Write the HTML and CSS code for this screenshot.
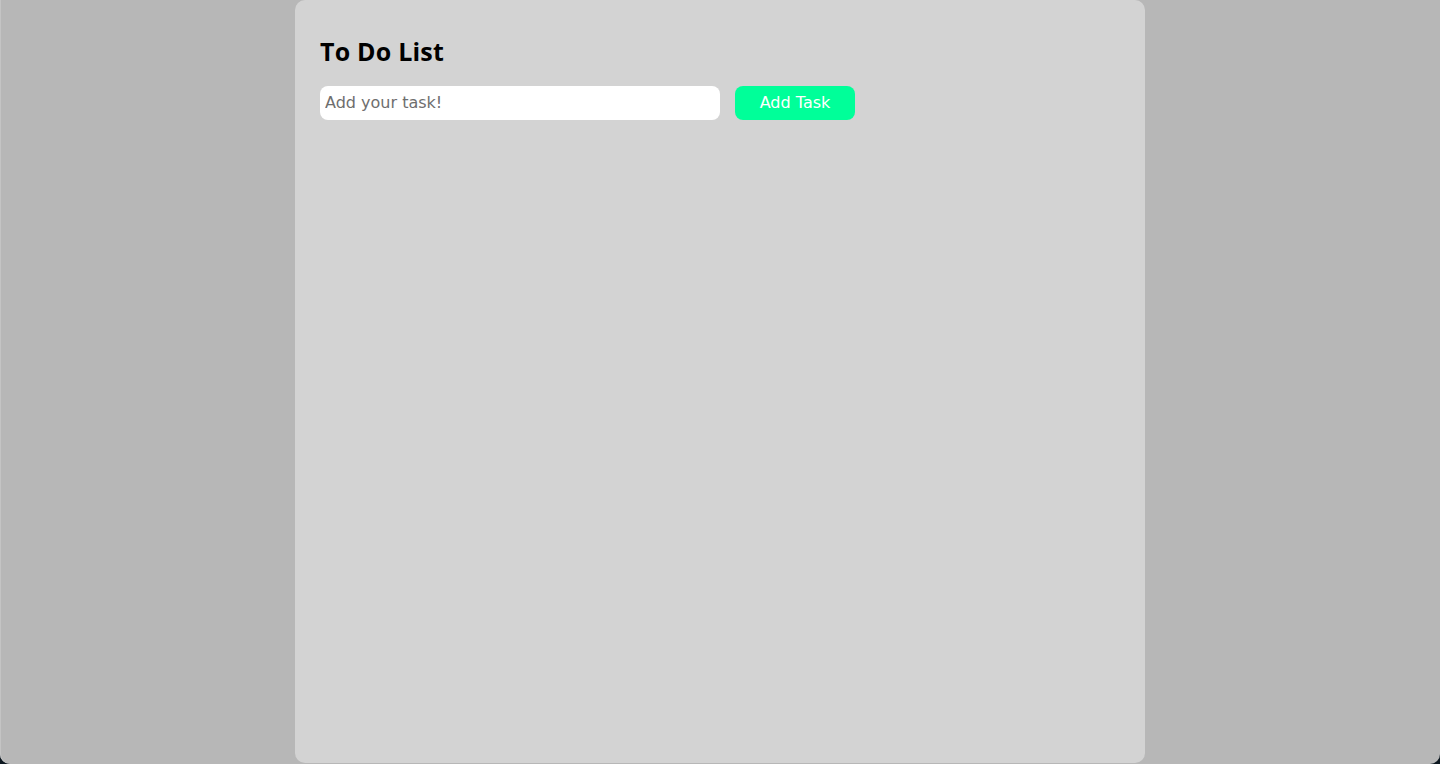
FILE: index.html
```html
<!DOCTYPE html>
<html lang="en">
<head>
<meta charset="utf-8">
<title>To Do List</title>
<link rel="stylesheet" href="styles.css">
</head>
<body>
<div class="page">
  <main class="card">
    <h1 class="title">To Do List</h1>
    <div class="row">
      <input class="task-input" type="text" placeholder="Add your task!">
      <button class="add-btn" type="button">Add Task</button>
    </div>
    <ul class="list"></ul>
  </main>
</div>
</body>
</html>
```

FILE: styles.css
```css
html {
  background: #0d1820;
  height: 100%;
}
body {
  margin: 0;
  height: 100%;
  font-family: "DejaVu Sans", "Open Sans", sans-serif;
}
.page {
  height: 764px;
  box-sizing: border-box;
  background: #b7b7b7;
  box-shadow: inset 1px 0 0 #c4c4c4;
  border-radius: 0 0 10px 10px;
  display: flex;
  justify-content: center;
}
.card {
  width: 850px;
  height: 763px;
  box-sizing: border-box;
  background: #d3d3d3;
  border-radius: 10px;
  padding: 36px 25px 25px;
}
.title {
  margin: 0 0 20px;
  font-family: "Open Sans", "DejaVu Sans", sans-serif;
  font-size: 25px;
  font-weight: 700;
  letter-spacing: 0.2px;
  color: #000;
  line-height: 30px;
}
.row {
  display: flex;
  gap: 15px;
}
.task-input {
  width: 400px;
  height: 34px;
  box-sizing: border-box;
  border: none;
  outline: none;
  border-radius: 8px;
  background: #fff;
  padding: 0 5px 1px;
  font-family: inherit;
  font-size: 16px;
  color: #333;
}
.task-input::placeholder {
  color: #6e6e6e;
}
.add-btn {
  width: 120px;
  height: 34px;
  border: none;
  border-radius: 8px;
  background: #00ff99;
  color: #fff;
  font-family: inherit;
  font-size: 16px;
  padding: 0 0 1px;
  cursor: pointer;
}
.list {
  list-style: none;
  margin: 0;
  padding: 0;
}
```
